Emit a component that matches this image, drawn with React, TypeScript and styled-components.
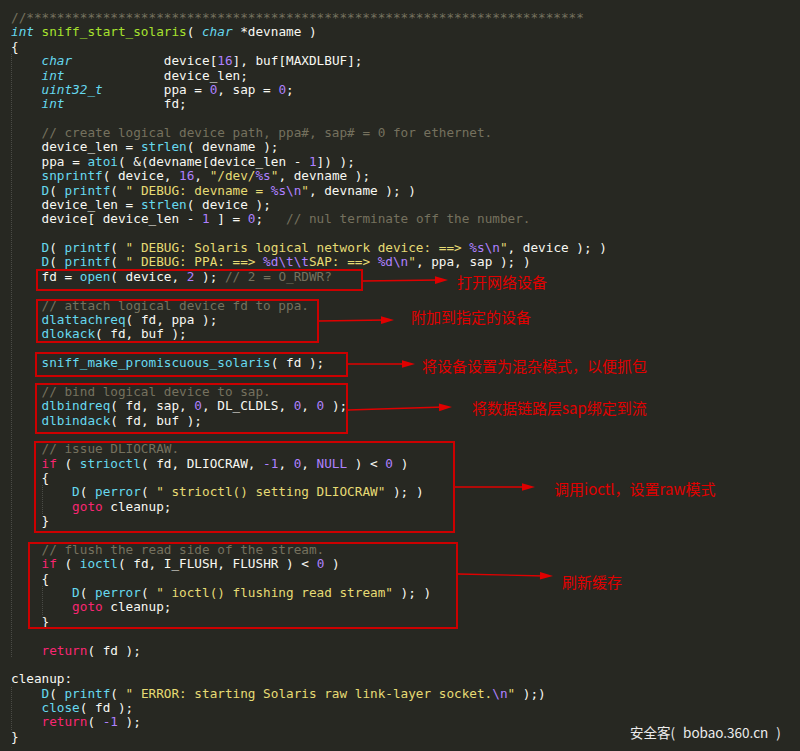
import React from "react";
import styled, { createGlobalStyle } from "styled-components";

const GlobalStyle = createGlobalStyle`
  html, body {
    margin: 0;
    padding: 0;
    background: #272822;
  }
  body {
    width: 800px;
    height: 751px;
    overflow: hidden;
  }
`;

type Kind = "plain" | "comment" | "string" | "number" | "keyword" | "type" | "call" | "def";

const palette: Record<Kind, string> = {
  plain: "#F8F8F2",
  comment: "#75715E",
  string: "#E6DB74",
  number: "#AE81FF",
  keyword: "#F92672",
  type: "#66D9EF",
  call: "#66D9EF",
  def: "#A6E22E",
};

const Page = styled.div`
  position: relative;
  width: 800px;
  height: 751px;
  overflow: hidden;
  background: #272822;
`;

const Editor = styled.div`
  padding: 11px 0 0 11px;
  font-family: "DejaVu Sans Mono", "Liberation Mono", monospace;
  font-size: 12.7px;
  line-height: 14.38px;
  color: #f8f8f2;
  white-space: pre;
`;

const Line = styled.div`
  height: 14.38px;
`;

const Guided = styled.div<{ $col: number }>`
  background-image: repeating-linear-gradient(
    to bottom,
    rgba(255, 255, 255, 0.16) 0 1px,
    transparent 1px 2px
  );
  background-repeat: no-repeat;
  background-size: 1px 100%;
  background-position: ${(p) => p.$col}ch 0;
`;

const Tok = styled.span<{ $kind: Kind }>`
  color: ${(p) => palette[p.$kind]};
  font-style: ${(p) => (p.$kind === "type" ? "italic" : "normal")};
`;

const Overlay = styled.div`
  position: absolute;
  inset: 0;
  pointer-events: none;
`;

const Box = styled.div`
  position: absolute;
  box-sizing: border-box;
  border: 2px solid #cc0000;
`;

const Label = styled.div`
  position: absolute;
  font-family: "Noto Sans CJK SC", "Noto Sans", sans-serif;
  font-size: 15px;
  line-height: 20px;
  color: #e00000;
  white-space: nowrap;
`;

const ArrowLayer = styled.svg`
  position: absolute;
  left: 0;
  top: 0;
`;

const Watermark = styled.div`
  position: absolute;
  left: 630px;
  top: 722px;
  font-family: "Noto Sans CJK SC", "Noto Sans", sans-serif;
  font-size: 13.5px;
  line-height: 20px;
  word-spacing: 5px;
  color: #ececec;
  white-space: nowrap;
`;

type Node = string | { guide: number; lines: Node[] };

const code: Node[] = [
  "//" + "*".repeat(73),
  "int sniff_start_solaris( char *devname )",
  "{",
  {
    guide: 0,
    lines: [
      "    char            device[16], buf[MAXDLBUF];",
      "    int             device_len;",
      "    uint32_t        ppa = 0, sap = 0;",
      "    int             fd;",
      "",
      "    // create logical device path, ppa#, sap# = 0 for ethernet.",
      "    device_len = strlen( devname );",
      "    ppa = atoi( &(devname[device_len - 1]) );",
      '    snprintf( device, 16, "/dev/%s", devname );',
      '    D( printf( " DEBUG: devname = %s\\n", devname ); )',
      "    device_len = strlen( device );",
      "    device[ device_len - 1 ] = 0;   // nul terminate off the number.",
      "",
      '    D( printf( " DEBUG: Solaris logical network device: ==> %s\\n", device ); )',
      '    D( printf( " DEBUG: PPA: ==> %d\\t\\tSAP: ==> %d\\n", ppa, sap ); )',
      "    fd = open( device, 2 ); // 2 = O_RDWR?",
      "",
      "    // attach logical device fd to ppa.",
      "    dlattachreq( fd, ppa );",
      "    dlokack( fd, buf );",
      "",
      "    sniff_make_promiscuous_solaris( fd );",
      "",
      "    // bind logical device to sap.",
      "    dlbindreq( fd, sap, 0, DL_CLDLS, 0, 0 );",
      "    dlbindack( fd, buf );",
      "",
      "    // issue DLIOCRAW.",
      "    if ( strioctl( fd, DLIOCRAW, -1, 0, NULL ) < 0 )",
      "    {",
      {
        guide: 4,
        lines: [
          '        D( perror( " strioctl() setting DLIOCRAW" ); )',
          "        goto cleanup;",
        ],
      },
      "    }",
      "",
      "    // flush the read side of the stream.",
      "    if ( ioctl( fd, I_FLUSH, FLUSHR ) < 0 )",
      "    {",
      {
        guide: 4,
        lines: [
          '        D( perror( " ioctl() flushing read stream" ); )',
          "        goto cleanup;",
        ],
      },
      "    }",
      "",
      "    return( fd );",
    ],
  },
  "",
  "cleanup:",
  {
    guide: 0,
    lines: [
      '    D( printf( " ERROR: starting Solaris raw link-layer socket.\\n" );)',
      "    close( fd );",
      "    return( -1 );",
    ],
  },
  "}",
];

const KEYWORDS = new Set(["if", "goto", "return"]);
const TYPES = new Set(["int", "char", "uint32_t"]);
const CONSTANTS = new Set(["NULL"]);
const DEFINITIONS = new Set(["sniff_start_solaris"]);

const TOKEN = /(\/\/.*$)|("(?:[^"\\]|\\.)*")|(-?\b\d+\b)|([A-Za-z_]\w*)|(\s+)|([^\sA-Za-z_\d"])/g;

function renderString(s: string, key: string) {
  const parts = s.split(/(%[sd]|\\[nt])/g).filter((x) => x.length > 0);
  return parts.map((p, i) => (
    <Tok key={`${key}-${i}`} $kind={/^(%[sd]|\\[nt])$/.test(p) ? "number" : "string"}>
      {p}
    </Tok>
  ));
}

function highlight(line: string) {
  const out: React.ReactNode[] = [];
  let m: RegExpExecArray | null;
  TOKEN.lastIndex = 0;
  let i = 0;
  while ((m = TOKEN.exec(line)) !== null) {
    const key = `t${i++}`;
    const [text, comment, str, num, ident] = m;
    if (comment) {
      out.push(<Tok key={key} $kind="comment">{text}</Tok>);
    } else if (str) {
      out.push(...renderString(text, key));
    } else if (num) {
      out.push(<Tok key={key} $kind="number">{text}</Tok>);
    } else if (ident) {
      const rest = line.slice(m.index + text.length);
      let kind: Kind = "plain";
      if (KEYWORDS.has(text)) kind = "keyword";
      else if (TYPES.has(text)) kind = "type";
      else if (CONSTANTS.has(text)) kind = "number";
      else if (DEFINITIONS.has(text)) kind = "def";
      else if (/^\s*\(/.test(rest)) kind = "call";
      out.push(<Tok key={key} $kind={kind}>{text}</Tok>);
    } else {
      out.push(<Tok key={key} $kind="plain">{text}</Tok>);
    }
    if (m[0].length === 0) TOKEN.lastIndex++;
  }
  return out;
}

function renderNodes(nodes: Node[], prefix: string): React.ReactNode[] {
  return nodes.map((n, i) => {
    const key = `${prefix}-${i}`;
    if (typeof n === "string") {
      return <Line key={key}>{n.length ? highlight(n) : " "}</Line>;
    }
    return (
      <Guided key={key} $col={n.guide}>
        {renderNodes(n.lines, key)}
      </Guided>
    );
  });
}

type Note = {
  box: { l: number; t: number; r: number; b: number };
  arrow: { x1: number; y1: number; x2: number; y2: number };
  label: { x: number; y: number; text: string };
};

const notes: Note[] = [
  {
    box: { l: 36, t: 269, r: 363, b: 291 },
    arrow: { x1: 363, y1: 281, x2: 448, y2: 280 },
    label: { x: 457, y: 282, text: "打开网络设备" },
  },
  {
    box: { l: 36, t: 299, r: 319, b: 343 },
    arrow: { x1: 319, y1: 321, x2: 394, y2: 320 },
    label: { x: 411, y: 317, text: "附加到指定的设备" },
  },
  {
    box: { l: 35, t: 352, r: 348, b: 377 },
    arrow: { x1: 348, y1: 364, x2: 415, y2: 364 },
    label: { x: 422, y: 366, text: "将设备设置为混杂模式，以便抓包" },
  },
  {
    box: { l: 35, t: 383, r: 348, b: 434 },
    arrow: { x1: 348, y1: 410, x2: 452, y2: 407 },
    label: { x: 472, y: 408, text: "将数据链路层sap绑定到流" },
  },
  {
    box: { l: 34, t: 441, r: 455, b: 533 },
    arrow: { x1: 455, y1: 487, x2: 535, y2: 487 },
    label: { x: 554, y: 489, text: "调用ioctl，设置raw模式" },
  },
  {
    box: { l: 28, t: 542, r: 458, b: 629 },
    arrow: { x1: 458, y1: 574, x2: 553, y2: 576 },
    label: { x: 562, y: 582, text: "刷新缓存" },
  },
];

function arrowHead(x1: number, y1: number, x2: number, y2: number) {
  const dx = x2 - x1;
  const dy = y2 - y1;
  const len = Math.hypot(dx, dy);
  const ux = dx / len;
  const uy = dy / len;
  const hl = 13;
  const hw = 3.8;
  const bx = x2 - ux * hl;
  const by = y2 - uy * hl;
  const px = -uy * hw;
  const py = ux * hw;
  return `${x2},${y2} ${bx + px},${by + py} ${bx - px},${by - py}`;
}

export default function App() {
  return (
    <>
      <GlobalStyle />
      <Page>
        <Editor>{renderNodes(code, "n")}</Editor>
        <Overlay>
          {notes.map((n, i) => (
            <Box
              key={`b${i}`}
              style={{
                left: n.box.l,
                top: n.box.t,
                width: n.box.r - n.box.l,
                height: n.box.b - n.box.t,
              }}
            />
          ))}
          <ArrowLayer width={800} height={751} viewBox="0 0 800 751">
            {notes.map((n, i) => {
              const { x1, y1, x2, y2 } = n.arrow;
              return (
                <g key={`a${i}`}>
                  <line x1={x1} y1={y1} x2={x2 - 8} y2={y2} stroke="#e00000" strokeWidth={1.3} />
                  <polygon points={arrowHead(x1, y1, x2, y2)} fill="#e00000" />
                </g>
              );
            })}
          </ArrowLayer>
          {notes.map((n, i) => (
            <Label key={`l${i}`} style={{ left: n.label.x, top: n.label.y - 10 }}>
              {n.label.text}
            </Label>
          ))}
          <Watermark>安全客( bobao.360.cn )</Watermark>
        </Overlay>
      </Page>
    </>
  );
}
